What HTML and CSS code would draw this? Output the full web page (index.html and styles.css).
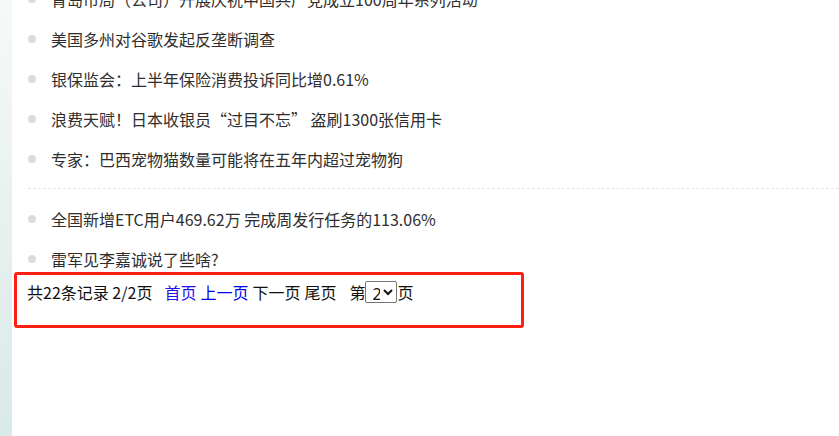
FILE: index.html
```html
<!DOCTYPE html>
<html lang="zh-CN">
<head>
<meta charset="utf-8">
<title>新闻列表</title>
<link rel="stylesheet" href="styles.css">
</head>
<body>
<div class="page">
  <div class="side"></div>
  <div class="main">
    <ul class="news">
      <li>青岛市局（公司）开展庆祝中国共产党成立100周年系列活动</li>
      <li>美国多州对谷歌发起反垄断调查</li>
      <li>银保监会：上半年保险消费投诉同比增0.61%</li>
      <li>浪费天赋！日本收银员“过目不忘” 盗刷1300张信用卡</li>
      <li>专家：巴西宠物猫数量可能将在五年内超过宠物狗</li>
    </ul>
    <div class="divider"></div>
    <ul class="news">
      <li>全国新增ETC用户469.62万 完成周发行任务的113.06%</li>
      <li>雷军见李嘉诚说了些啥?</li>
    </ul>
    <div class="pager">
      <span>共22条记录 2/2页</span>
      <a class="link first">首页</a>
      <a class="link">上一页</a>
      <span class="plain">下一页</span>
      <span class="plain">尾页</span>
      <span class="goto">第<select class="sel"><option>1</option><option selected>2</option></select>页</span>
    </div>
  </div>
</div>
</body>
</html>
```

FILE: styles.css
```css
html, body {
  margin: 0;
  padding: 0;
  height: 100%;
  overflow: hidden;
  background: #fff;
}

body {
  font-family: "Noto Sans CJK SC", "Noto Sans", sans-serif;
  font-size: 16px;
  color: #333;
}

.page {
  display: flex;
  height: 436px;
}

.side {
  width: 12px;
  flex: none;
  background: linear-gradient(to bottom, #f6f9f9 0%, #e8f1f0 50%, #d8eae8 100%);
}

.main {
  flex: 1;
  min-width: 0;
  margin-top: -16px;
}

.news {
  list-style: none;
  margin: 0;
  padding: 0;
  display: flex;
  flex-direction: column;
  gap: 10px;
}

.news li {
  display: flex;
  align-items: center;
  height: 30px;
  line-height: 30px;
  white-space: nowrap;
  color: #2e2e2e;
}

.news li::before {
  content: "";
  width: 8px;
  height: 8px;
  border-radius: 50%;
  background: #dcdcdc;
  margin-left: 16px;
  margin-right: 15px;
  flex: none;
}

.divider {
  margin: 14px 0 15px 16px;
  border-top: 1px dashed #e6e6e6;
}

.pager {
  box-sizing: border-box;
  width: 510px;
  height: 56px;
  margin: -2px 0 0 2px;
  padding: 6px 10px 0 10px;
  border: 3px solid #ff1e12;
  border-radius: 3px;
  display: flex;
  align-items: flex-start;
  line-height: 22px;
  color: #111;
  white-space: nowrap;
}

.pager .link {
  color: #0000ee;
  margin-left: 4px;
}

.pager .link.first {
  margin-left: 12px;
  color: #2211ee;
}

.pager .plain {
  margin-left: 4px;
}

.pager .goto {
  margin-left: 13px;
  display: flex;
  align-items: center;
}

.sel {
  font-family: "Noto Sans", "DejaVu Sans", sans-serif;
  font-size: 16px;
  height: 22px;
  width: 32px;
  padding: 0 0 0 2px;
  margin: 0;
  color: #111;
  border: 1px solid #767676;
  border-radius: 2px;
  background: #fff;
}
```
